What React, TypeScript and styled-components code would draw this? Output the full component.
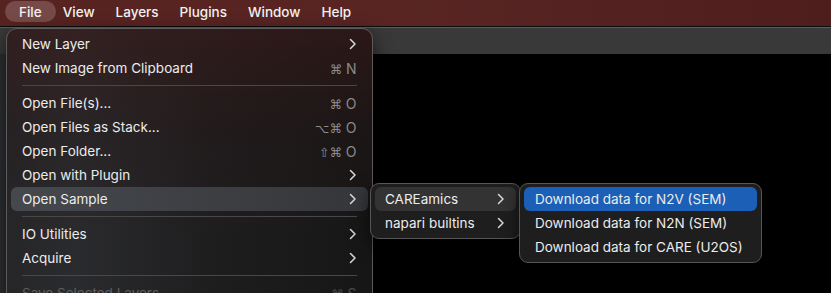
import React from "react";
import styled, { createGlobalStyle } from "styled-components";

const Global = createGlobalStyle`
  html, body { margin: 0; padding: 0; background: #000; }
  body { width: 831px; height: 293px; overflow: hidden; font-family: Inter, "Liberation Sans", "DejaVu Sans", sans-serif; }
`;

const Window = styled.div`
  position: relative;
  width: 831px;
  height: 293px;
  display: flex;
  flex-direction: column;
  background: #000;
  overflow: hidden;
`;

const MenuBar = styled.div`
  height: 26px;
  display: flex;
  align-items: center;
  padding-left: 8.5px;
  background: linear-gradient(90deg, #572321 0%, #582523 50%, #4e1e1c 100%);
  border-bottom: 1px solid #0c0c0c;
`;

const BarItem = styled.div<{ $active?: boolean }>`
  height: 21px;
  margin-top: -3px;
  display: flex;
  align-items: center;
  padding: 0 ${(p) => (p.$active ? "14px" : "10.5px")};
  margin-left: ${(p) => (p.$active ? "-3.5px" : "0")};
  margin-right: ${(p) => (p.$active ? "-3.5px" : "0")};
  border-radius: 11px;
  color: #f2f2f2;
  font-size: 13.5px;
  font-weight: 500;
  background: ${(p) => (p.$active ? "rgba(255,255,255,0.18)" : "transparent")};
`;

const ToolStrip = styled.div`
  height: 26px;
  background: #393939;
  border-top: 1px solid #5c5c5c;
`;

const Body = styled.div`
  flex: 1;
  display: flex;
`;

const Dock = styled.div`
  width: 6px;
  background: #2b2e31;
  border-right: 1px solid #3c3f43;
`;

const Canvas = styled.div`
  flex: 1;
  background: #000;
`;

const Menu = styled.div<{ $x: number; $y: number; $w: number }>`
  position: absolute;
  left: ${(p) => p.$x}px;
  top: ${(p) => p.$y}px;
  width: ${(p) => p.$w}px;
  box-sizing: border-box;
  padding: 3px 4px;
  border: 1px solid #5e5a5a;
  border-radius: 10px;
  display: flex;
  flex-direction: column;
  box-shadow: 0 6px 18px rgba(0, 0, 0, 0.6);
`;

const MainMenu = styled(Menu)`
  border-radius: 11px;
  padding-bottom: 20px;
  background:
    linear-gradient(180deg, rgba(60, 24, 24, 0.55) 0%, rgba(40, 20, 20, 0.25) 35%, rgba(0, 0, 0, 0) 70%),
    linear-gradient(90deg, #262628 0%, #2a2b2e 18%, #1f1e1f 55%, #171616 100%);
`;

const SubMenu = styled(Menu)`
  background: #1e1e1e;
  border-color: #555;
  border-radius: 9px;
`;

const Row = styled.div<{ $hl?: "gray" | "blue" | "sub"; $dim?: boolean; $pl?: number }>`
  height: 24px;
  display: flex;
  align-items: center;
  justify-content: space-between;
  padding: 0 11px 0 ${(p) => p.$pl ?? 11}px;
  border-radius: 6px;
  font-size: 13.5px;
  color: ${(p) => (p.$dim ? "#5e5e5e" : "#ececec")};
  background: ${(p) =>
    p.$hl === "gray"
      ? "linear-gradient(90deg, #45484d 0%, #3c3e42 60%, #35363a 100%)"
      : p.$hl === "blue"
      ? "#1b5fb6"
      : p.$hl === "sub"
      ? "#333334"
      : "transparent"};
  white-space: nowrap;
`;

const Shortcut = styled.span<{ $dim?: boolean }>`
  color: ${(p) => (p.$dim ? "#4a4a4a" : "#8a8a8a")};
  font-family: "DejaVu Sans", Inter, sans-serif;
  font-size: 12.5px;
  letter-spacing: 0.5px;
  & b {
    font-family: Inter, "Liberation Sans", sans-serif;
    font-weight: 400;
    font-size: 14px;
    margin-left: 3px;
  }
`;

const Sep = styled.div`
  height: 11px;
  display: flex;
  align-items: center;
  padding: 0 11px;
  &::after {
    content: "";
    flex: 1;
    height: 1px;
    background: #4a4748;
  }
`;

const Chevron = () => (
  <svg width="8" height="12" viewBox="0 0 8 12">
    <polyline points="1.5,1.5 6,6 1.5,10.5" fill="none" stroke="#d8d8d8" strokeWidth="1.5" strokeLinecap="round" strokeLinejoin="round" />
  </svg>
);

type Item =
  | { sep: true }
  | { label: string; sc?: [string, string]; sub?: boolean; hl?: boolean; dim?: boolean; sep?: false };

const items: Item[] = [
  { label: "New Layer", sub: true },
  { label: "New Image from Clipboard", sc: ["⌘", "N"] },
  { sep: true },
  { label: "Open File(s)...", sc: ["⌘", "O"] },
  { label: "Open Files as Stack...", sc: ["⌥⌘", "O"] },
  { label: "Open Folder...", sc: ["⇧⌘", "O"] },
  { label: "Open with Plugin", sub: true },
  { label: "Open Sample", sub: true, hl: true },
  { sep: true },
  { label: "IO Utilities", sub: true },
  { label: "Acquire", sub: true },
  { sep: true },
  { label: "Save Selected Layers", sc: ["⌘", "S"], dim: true },
];

export default function App() {
  return (
    <>
      <Global />
      <Window>
        <MenuBar>
          <BarItem $active>File</BarItem>
          <BarItem>View</BarItem>
          <BarItem>Layers</BarItem>
          <BarItem>Plugins</BarItem>
          <BarItem>Window</BarItem>
          <BarItem>Help</BarItem>
        </MenuBar>
        <ToolStrip />
        <Body>
          <Dock />
          <Canvas />
        </Body>

        <MainMenu $x={6} $y={28} $w={367}>
          {items.map((it, i) =>
            it.sep ? (
              <Sep key={i} />
            ) : (
              <Row key={i} $hl={it.hl ? "gray" : undefined} $dim={it.dim}>
                <span>{it.label}</span>
                {it.sub && <Chevron />}
                {it.sc && (
                  <Shortcut $dim={it.dim}>
                    {it.sc[0]}
                    <b>{it.sc[1]}</b>
                  </Shortcut>
                )}
              </Row>
            )
          )}
        </MainMenu>

        <SubMenu $x={370} $y={183} $w={151}>
          <Row $hl="sub" $pl={10}>
            <span>CAREamics</span>
            <Chevron />
          </Row>
          <Row $pl={10}>
            <span>napari builtins</span>
            <Chevron />
          </Row>
        </SubMenu>

        <SubMenu $x={519} $y={183} $w={243}>
          <Row $hl="blue" $pl={11}>
            <span>Download data for N2V (SEM)</span>
          </Row>
          <Row $pl={11}>
            <span>Download data for N2N (SEM)</span>
          </Row>
          <Row $pl={11}>
            <span>Download data for CARE (U2OS)</span>
          </Row>
        </SubMenu>
      </Window>
    </>
  );
}
